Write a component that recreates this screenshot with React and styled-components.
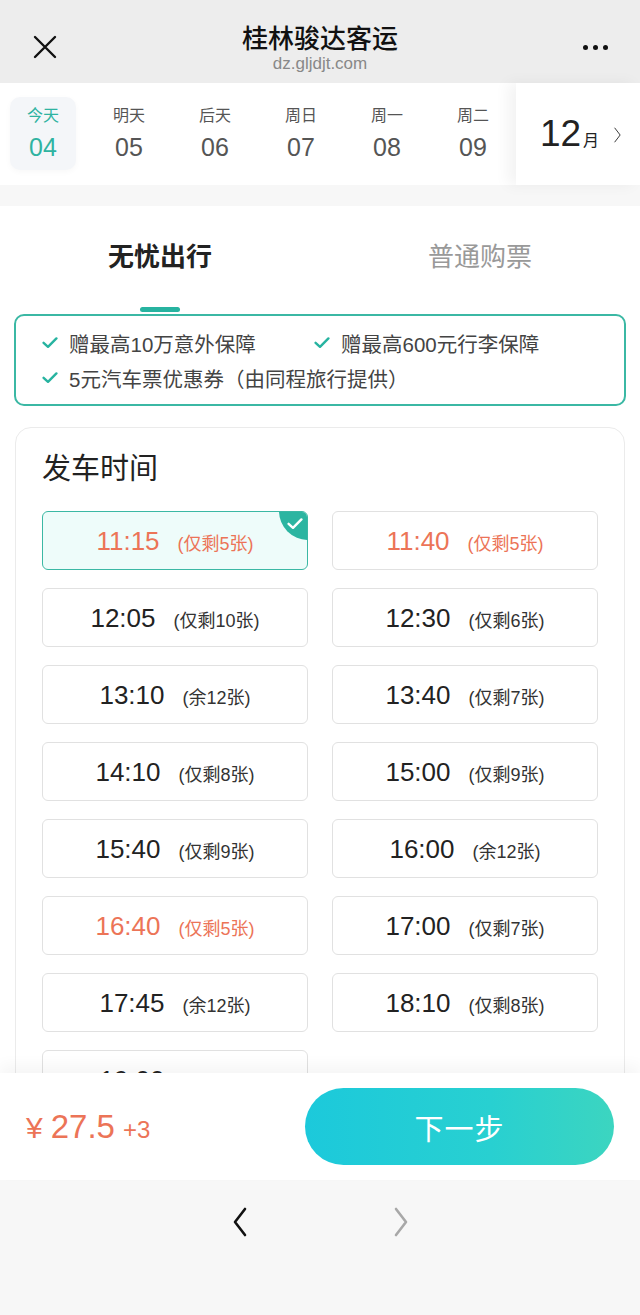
import styled, { createGlobalStyle } from "styled-components";

const GlobalStyle = createGlobalStyle`
  html, body { margin: 0; padding: 0; }
  body {
    font-family: "Liberation Sans", "Noto Sans CJK SC", sans-serif;
    background: #f7f7f7;
  }
  * { box-sizing: border-box; }
`;

const days = [
  { label: "今天", num: "04", active: true },
  { label: "明天", num: "05" },
  { label: "后天", num: "06" },
  { label: "周日", num: "07" },
  { label: "周一", num: "08" },
  { label: "周二", num: "09" },
];

const slots = [
  { time: "11:15", note: "(仅剩5张)", hot: true, selected: true },
  { time: "11:40", note: "(仅剩5张)", hot: true },
  { time: "12:05", note: "(仅剩10张)" },
  { time: "12:30", note: "(仅剩6张)" },
  { time: "13:10", note: "(余12张)" },
  { time: "13:40", note: "(仅剩7张)" },
  { time: "14:10", note: "(仅剩8张)" },
  { time: "15:00", note: "(仅剩9张)" },
  { time: "15:40", note: "(仅剩9张)" },
  { time: "16:00", note: "(余12张)" },
  { time: "16:40", note: "(仅剩5张)", hot: true },
  { time: "17:00", note: "(仅剩7张)" },
  { time: "17:45", note: "(余12张)" },
  { time: "18:10", note: "(仅剩8张)" },
  { time: "19:00", note: "(余12张)" },
];

const Check = ({ size = 16, color = "#27b3a0", stroke = 3 }) => (
  <svg width={size} height={size * 0.8} viewBox="0 0 20 16" fill="none">
    <path d="M2 8.5l5.5 5L18 3" stroke={color} strokeWidth={stroke} strokeLinecap="round" strokeLinejoin="round" />
  </svg>
);

const Chevron = ({ dir = "right", color = "#000", w = 16, h = 30, stroke = 2.6 }) => (
  <svg width={w} height={h} viewBox="0 0 16 30" fill="none">
    <path
      d={dir === "left" ? "M13 2L3 15l10 13" : "M3 2l10 13L3 28"}
      stroke={color}
      strokeWidth={stroke}
      strokeLinecap="round"
      strokeLinejoin="round"
    />
  </svg>
);

export default function App() {
  return (
    <>
      <GlobalStyle />
      <Page>
        <Header>
          <HeaderIcon>
            <svg width="24" height="24" viewBox="0 0 24 24" fill="none">
              <path d="M2 2l20 20M22 2L2 22" stroke="#111" strokeWidth="2.4" strokeLinecap="round" />
            </svg>
          </HeaderIcon>
          <TitleBlock>
            <Title>桂林骏达客运</Title>
            <Domain>dz.gljdjt.com</Domain>
          </TitleBlock>
          <HeaderIcon>
            <Dots>
              <i /><i /><i />
            </Dots>
          </HeaderIcon>
        </Header>

        <DateStrip>
          <Days>
            {days.map((d) => (
              <Day key={d.num} $active={d.active}>
                <DayLabel>{d.label}</DayLabel>
                <DayNum>{d.num}</DayNum>
              </Day>
            ))}
          </Days>
          <Month>
            <MonthNum>12</MonthNum>
            <MonthUnit>月</MonthUnit>
            <MonthArrow>
              <Chevron color="#333" w={9} h={16} stroke={1.8} />
            </MonthArrow>
          </Month>
        </DateStrip>

        <Main>
          <Tabs>
            <Tab $active>
              <TabLabel $active>无忧出行</TabLabel>
              <TabLine />
            </Tab>
            <Tab>
              <TabLabel>普通购票</TabLabel>
            </Tab>
          </Tabs>

          <Perks>
            <Perk>
              <Check />
              赠最高10万意外保障
            </Perk>
            <Perk>
              <Check />
              赠最高600元行李保障
            </Perk>
            <Perk $wide>
              <Check />
              5元汽车票优惠券（由同程旅行提供）
            </Perk>
          </Perks>

          <Panel>
            <PanelTitle>发车时间</PanelTitle>
            <Slots>
              {slots.map((s) => (
                <Slot key={s.time} $selected={s.selected}>
                  <SlotTime $hot={s.hot}>{s.time}</SlotTime>
                  <SlotNote $hot={s.hot}>{s.note}</SlotNote>
                  {s.selected && (
                    <Badge>
                      <Check size={16} color="#fff" stroke={3} />
                    </Badge>
                  )}
                </Slot>
              ))}
            </Slots>
          </Panel>
        </Main>

        <BottomBar>
          <Price>
            <Yen>¥</Yen>
            <Amount>27.5</Amount>
            <Extra>+3</Extra>
          </Price>
          <NextButton>下一步</NextButton>
        </BottomBar>

        <BrowserNav>
          <Chevron dir="left" color="#111" />
          <Chevron dir="right" color="#a8a8a8" />
        </BrowserNav>
      </Page>
    </>
  );
}

const Page = styled.div`
  width: 640px;
  height: 1315px;
  display: flex;
  flex-direction: column;
  overflow: hidden;
  background: #f7f7f7;
`;

const Header = styled.header`
  height: 83px;
  flex: none;
  background: #ededed;
  display: grid;
  grid-template-columns: 90px 1fr 90px;
`;

const HeaderIcon = styled.div`
  display: flex;
  justify-content: center;
  padding-top: 35px;
`;

const Dots = styled.div`
  display: flex;
  gap: 5px;
  padding-top: 10px;
  i {
    width: 5px;
    height: 5px;
    border-radius: 50%;
    background: #111;
  }
`;

const TitleBlock = styled.div`
  display: flex;
  flex-direction: column;
  align-items: center;
  padding-top: 24px;
`;

const Title = styled.div`
  font-size: 26px;
  line-height: 30px;
  font-weight: 500;
  color: #111;
`;

const Domain = styled.div`
  font-size: 17px;
  line-height: 19px;
  color: #888;
`;

const DateStrip = styled.div`
  height: 102px;
  flex: none;
  background: #fff;
  display: flex;
  margin-bottom: 21px;
`;

const Days = styled.div`
  display: flex;
  padding-top: 14px;
`;

const Day = styled.div`
  width: 66px;
  height: 73px;
  margin: 0 10px;
  border-radius: 10px;
  background: ${(p) => (p.$active ? "#f4f6f9" : "transparent")};
  box-shadow: ${(p) => (p.$active ? "0 2px 6px rgba(0, 0, 0, 0.03)" : "none")};
  color: ${(p) => (p.$active ? "#2fb3a1" : "#555")};
  display: flex;
  flex-direction: column;
  align-items: center;
  padding-top: 8px;
`;

const DayLabel = styled.div`
  font-size: 16px;
  line-height: 22px;
`;

const DayNum = styled.div`
  font-size: 25px;
  line-height: 30px;
  margin-top: 5px;
  font-weight: 300;
`;

const Month = styled.div`
  flex: 1;
  display: flex;
  align-items: baseline;
  justify-content: center;
  padding-top: 30px;
  padding-left: 6px;
  box-shadow: -8px 0 14px rgba(0, 0, 0, 0.05);
  color: #222;
`;

const MonthNum = styled.span`
  font-size: 37px;
  line-height: 42px;
`;

const MonthUnit = styled.span`
  font-size: 16px;
  margin-left: 2px;
`;

const MonthArrow = styled.span`
  margin-left: 14px;
  align-self: center;
  margin-top: -28px;
  display: flex;
`;

const Main = styled.main`
  flex: 1;
  background: #fff;
  overflow: hidden;
  padding-top: 2px;
`;

const Tabs = styled.div`
  display: grid;
  grid-template-columns: 1fr 1fr;
  height: 106px;
`;

const Tab = styled.div`
  display: flex;
  flex-direction: column;
  align-items: center;
  padding-top: 31px;
`;

const TabLabel = styled.div`
  font-size: 26px;
  line-height: 36px;
  font-weight: ${(p) => (p.$active ? 700 : 400)};
  color: ${(p) => (p.$active ? "#222" : "#999")};
`;

const TabLine = styled.div`
  width: 40px;
  height: 5px;
  border-radius: 3px;
  background: #27b3a0;
  margin-top: 32px;
`;

const Perks = styled.div`
  margin: 0 14px;
  height: 92px;
  border: 2px solid #3bb8a4;
  border-radius: 10px;
  display: grid;
  grid-template-columns: 272px 1fr;
  grid-auto-rows: 35px;
  align-content: center;
  padding-left: 26px;
`;

const Perk = styled.div`
  display: flex;
  align-items: center;
  gap: 11px;
  font-size: 20.5px;
  color: #444;
  white-space: nowrap;
  grid-column: ${(p) => (p.$wide ? "1 / 3" : "auto")};
`;

const Panel = styled.section`
  margin: 21px 15px 0;
  border: 1.5px solid #ebebeb;
  border-radius: 16px;
  padding: 21px 26px 30px;
`;

const PanelTitle = styled.h2`
  margin: 0 0 22px;
  font-size: 29px;
  line-height: 40px;
  font-weight: 400;
  color: #222;
`;

const Slots = styled.div`
  display: grid;
  grid-template-columns: 1fr 1fr;
  column-gap: 24px;
  row-gap: 18px;
`;

const Slot = styled.div`
  position: relative;
  overflow: hidden;
  height: 59px;
  border-radius: 6px;
  border: 1.5px solid ${(p) => (p.$selected ? "#3bb8a4" : "#e1e1e1")};
  background: ${(p) => (p.$selected ? "#eefcfa" : "#fff")};
  display: flex;
  align-items: baseline;
  justify-content: center;
  padding-top: 13px;
`;

const SlotTime = styled.span`
  font-size: 26px;
  line-height: 32px;
  color: ${(p) => (p.$hot ? "#ec7457" : "#222")};
`;

const SlotNote = styled.span`
  font-size: 18px;
  margin-left: 18px;
  color: ${(p) => (p.$hot ? "#ec7457" : "#333")};
`;

const Badge = styled.div`
  position: absolute;
  top: -30px;
  right: -30px;
  width: 58px;
  height: 58px;
  border-radius: 50%;
  background: #2cb5a1;
  display: flex;
  align-items: flex-end;
  justify-content: flex-start;
  padding: 0 0 10px 8px;
`;

const BottomBar = styled.footer`
  height: 107px;
  flex: none;
  background: #fff;
  display: flex;
  align-items: center;
  justify-content: space-between;
  padding: 0 26px;
  box-shadow: 0 -8px 14px rgba(0, 0, 0, 0.04);
  position: relative;
`;

const Price = styled.div`
  display: flex;
  align-items: baseline;
  color: #ec7457;
`;

const Yen = styled.span`
  font-size: 30px;
  margin-right: 8px;
`;

const Amount = styled.span`
  font-size: 33px;
`;

const Extra = styled.span`
  font-size: 24px;
  margin-left: 8px;
`;

const NextButton = styled.button`
  width: 309px;
  height: 77px;
  border: none;
  border-radius: 39px;
  background: linear-gradient(90deg, #1cc9db 0%, #28d0d1 60%, #3cd5c0 100%);
  color: #fff;
  font-family: inherit;
  font-size: 29px;
  letter-spacing: 1px;
`;

const BrowserNav = styled.nav`
  height: 135px;
  flex: none;
  background: #f7f7f7;
  display: flex;
  justify-content: center;
  gap: 145px;
  padding-top: 27px;
`;
